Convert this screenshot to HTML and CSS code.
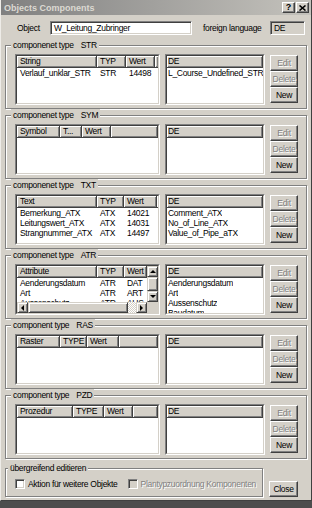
FILE: index.html
```html
<!DOCTYPE html>
<html lang="de">
<head>
    <meta charset="UTF-8">
    <title>Objects Components</title>
    <link rel="stylesheet" href="styles.css">
</head>
<body>
<div class="window">
    <div class="titlebar">
        <span class="title">Objects Components</span>
        <span class="tb-btns">
            <span class="tb-btn">?</span>
            <span class="tb-btn">
                <svg width="7" height="6" viewBox="0 0 7 6"><path d="M0.5 0.5 L6.5 5.5 M6.5 0.5 L0.5 5.5" stroke="#000" stroke-width="1.6"/></svg>
            </span>
        </span>
    </div>

    <div class="content">
        <div class="obj-row">
            <span class="obj-lbl">Object</span>
            <div class="edit obj-edit">W_Leitung_Zubringer</div>
            <span class="lang-lbl">foreign language</span>
            <div class="edit lang-edit">DE</div>
        </div>

        <!-- STR -->
        <fieldset class="group">
            <legend>componenet type<span class="type">STR</span></legend>
            <div class="group-body">
                <div class="list list-main">
                    <div class="list-in">
                        <div class="head">
                            <span class="hc c80">String</span>
                            <span class="hc c29">TYP</span>
                            <span class="hc c29">Wert</span>
                            <span class="hc fill"></span>
                        </div>
                        <div class="row">
                            <span class="cell c80">Verlauf_unklar_STR</span>
                            <span class="cell c29">STR</span>
                            <span class="cell c29">14498</span>
                        </div>
                    </div>
                </div>
                <div class="list list-lang">
                    <div class="list-in">
                        <div class="head"><span class="hc fill">DE</span></div>
                        <div class="row"><span class="cell">L_Course_Undefined_STR</span></div>
                    </div>
                </div>
                <div class="btns">
                    <span class="btn off">Edit</span>
                    <span class="btn off">Delete</span>
                    <span class="btn">New</span>
                </div>
            </div>
        </fieldset>

        <!-- SYM -->
        <fieldset class="group">
            <legend>componenet type<span class="type">SYM</span></legend>
            <div class="group-body">
                <div class="list list-main">
                    <div class="list-in">
                        <div class="head">
                            <span class="hc c43">Symbol</span>
                            <span class="hc c22">T...</span>
                            <span class="hc c29">Wert</span>
                            <span class="hc fill"></span>
                        </div>
                    </div>
                </div>
                <div class="list list-lang">
                    <div class="list-in">
                        <div class="head"><span class="hc fill">DE</span></div>
                    </div>
                </div>
                <div class="btns">
                    <span class="btn off">Edit</span>
                    <span class="btn off">Delete</span>
                    <span class="btn">New</span>
                </div>
            </div>
        </fieldset>

        <!-- TXT -->
        <fieldset class="group">
            <legend>componenet type<span class="type">TXT</span></legend>
            <div class="group-body">
                <div class="list list-main">
                    <div class="list-in">
                        <div class="head">
                            <span class="hc c80">Text</span>
                            <span class="hc c27">TYP</span>
                            <span class="hc c33">Wert</span>
                            <span class="hc fill"></span>
                        </div>
                        <div class="row">
                            <span class="cell c80">Bemerkung_ATX</span>
                            <span class="cell c27">ATX</span>
                            <span class="cell c33">14021</span>
                        </div>
                        <div class="row">
                            <span class="cell c80">Leitungswert_ATX</span>
                            <span class="cell c27">ATX</span>
                            <span class="cell c33">14031</span>
                        </div>
                        <div class="row">
                            <span class="cell c80">Strangnummer_ATX</span>
                            <span class="cell c27">ATX</span>
                            <span class="cell c33">14497</span>
                        </div>
                    </div>
                </div>
                <div class="list list-lang">
                    <div class="list-in">
                        <div class="head"><span class="hc fill">DE</span></div>
                        <div class="row"><span class="cell">Comment_ATX</span></div>
                        <div class="row"><span class="cell">No_of_Line_ATX</span></div>
                        <div class="row"><span class="cell">Value_of_Pipe_aTX</span></div>
                    </div>
                </div>
                <div class="btns">
                    <span class="btn off">Edit</span>
                    <span class="btn off">Delete</span>
                    <span class="btn">New</span>
                </div>
            </div>
        </fieldset>

        <!-- ATR -->
        <fieldset class="group">
            <legend>componenet type<span class="type">ATR</span></legend>
            <div class="group-body">
                <div class="list list-main">
                    <div class="list-in scrolled">
                        <div class="pane">
                            <div class="head">
                                <span class="hc c80">Attribute</span>
                                <span class="hc c27">TYP</span>
                                <span class="hc c23">Wert</span>
                            </div>
                            <div class="row">
                                <span class="cell c80">Aenderungsdatum</span>
                                <span class="cell c27">ATR</span>
                                <span class="cell c23">DAT</span>
                            </div>
                            <div class="row">
                                <span class="cell c80">Art</span>
                                <span class="cell c27">ATR</span>
                                <span class="cell c23">ART</span>
                            </div>
                            <div class="row">
                                <span class="cell c80">Aussenschutz</span>
                                <span class="cell c27">ATR</span>
                                <span class="cell c23">AUS</span>
                            </div>
                        </div>
                        <div class="vscroll">
                            <span class="sb-btn up"></span>
                            <span class="sb-thumb"></span>
                            <span class="sb-btn down"></span>
                        </div>
                        <div class="hscroll">
                            <span class="sb-btn left"></span>
                            <span class="sb-thumb wide"></span>
                            <span class="sb-track"></span>
                            <span class="sb-btn right"></span>
                        </div>
                        <div class="corner"></div>
                    </div>
                </div>
                <div class="list list-lang">
                    <div class="list-in">
                        <div class="head"><span class="hc fill">DE</span></div>
                        <div class="row"><span class="cell">Aenderungsdatum</span></div>
                        <div class="row"><span class="cell">Art</span></div>
                        <div class="row"><span class="cell">Aussenschutz</span></div>
                        <div class="row"><span class="cell">Baudatum</span></div>
                    </div>
                </div>
                <div class="btns">
                    <span class="btn off">Edit</span>
                    <span class="btn off">Delete</span>
                    <span class="btn">New</span>
                </div>
            </div>
        </fieldset>

        <!-- RAS -->
        <fieldset class="group">
            <legend>component type<span class="type">RAS</span></legend>
            <div class="group-body">
                <div class="list list-main">
                    <div class="list-in">
                        <div class="head">
                            <span class="hc c43">Raster</span>
                            <span class="hc c27">TYPE</span>
                            <span class="hc c32">Wert</span>
                            <span class="hc fill"></span>
                        </div>
                    </div>
                </div>
                <div class="list list-lang">
                    <div class="list-in">
                        <div class="head"><span class="hc fill">DE</span></div>
                    </div>
                </div>
                <div class="btns">
                    <span class="btn off">Edit</span>
                    <span class="btn off">Delete</span>
                    <span class="btn">New</span>
                </div>
            </div>
        </fieldset>

        <!-- PZD -->
        <fieldset class="group">
            <legend>component type<span class="type">PZD</span></legend>
            <div class="group-body">
                <div class="list list-main">
                    <div class="list-in">
                        <div class="head">
                            <span class="hc c56">Prozedur</span>
                            <span class="hc c31">TYPE</span>
                            <span class="hc c29">Wert</span>
                            <span class="hc fill"></span>
                        </div>
                    </div>
                </div>
                <div class="list list-lang">
                    <div class="list-in">
                        <div class="head"><span class="hc fill">DE</span></div>
                    </div>
                </div>
                <div class="btns">
                    <span class="btn off">Edit</span>
                    <span class="btn off">Delete</span>
                    <span class="btn">New</span>
                </div>
            </div>
        </fieldset>

        <div class="bottom-row">
            <fieldset class="group across">
                <legend>übergreifend editieren</legend>
                <div class="checks">
                    <span class="check first"><span class="box"></span>Aktion für weitere Objekte</span>
                    <span class="check disabled"><span class="box"></span>Plantypzuordnung Komponenten</span>
                </div>
            </fieldset>
            <span class="btn close">Close</span>
        </div>
    </div>
</div>
</body>
</html>
```

FILE: styles.css
```css
body {
    margin: 0;
    background: #4d4d4d;
    font-family: "Liberation Sans", Arial, sans-serif;
    font-size: 8.5px;
    letter-spacing: -0.3px;
    color: #000;
}
.window {
    width: 312px;
    height: 501px;
    box-sizing: border-box;
    background: #d4d0c8;
    border-left: 1px solid #eeece8;
    border-right: 1px solid #404040;
    border-bottom: 1px solid #404040;
    display: flex;
    flex-direction: column;
}
.titlebar {
    height: 15px;
    flex: none;
    display: flex;
    align-items: center;
    justify-content: space-between;
    padding: 0 2px 0 3px;
    background: linear-gradient(to right, #808080, #c4c2bc);
}
.title {
    color: #dcd9d2;
    font-weight: bold;
    font-size: 9px;
    letter-spacing: 0;
}
.tb-btns {
    display: flex;
    gap: 1px;
}
.tb-btn {
    width: 13px;
    height: 11px;
    box-sizing: border-box;
    display: flex;
    align-items: center;
    justify-content: center;
    background: #d4d0c8;
    border: 1px solid;
    border-color: #fff #404040 #404040 #fff;
    box-shadow: inset -1px -1px #808080;
    font-weight: bold;
    font-size: 9px;
    line-height: 9px;
    letter-spacing: 0;
}
.content {
    flex: 1;
    display: flex;
    flex-direction: column;
    padding: 6px 4px 0;
}

/* object row */
.obj-row {
    display: flex;
    align-items: center;
    height: 14px;
    margin-bottom: 4px;
    white-space: nowrap;
}
.obj-lbl {
    width: 33px;
    margin-left: 12px;
}
.edit {
    height: 14px;
    box-sizing: border-box;
    border: 1px solid;
    border-color: #808080 #fff #fff #808080;
    box-shadow: inset 1px 1px #404040, inset -1px -1px #d4d0c8;
    background: #fff;
    padding-left: 3px;
    line-height: 12px;
    white-space: nowrap;
}
.obj-edit {
    width: 142px;
}
.lang-lbl {
    width: 67px;
    margin-left: 11px;
}
.lang-edit {
    width: 35px;
    background: #d4d0c8;
}

/* group boxes */
.group {
    margin: 0;
    padding: 2px 8px 3px 9px;
    border: 1px solid #808080;
    box-shadow: inset 1px 1px #fff, 1px 1px #fff;
    min-width: 0;
}
.group legend {
    padding: 0 2px;
    margin-left: -4px;
    line-height: 13px;
    background: #d4d0c8;
    white-space: nowrap;
}
.type {
    margin-left: 7px;
}
.group-body {
    display: flex;
    gap: 5px;
}

/* list views */
.list {
    height: 51px;
    box-sizing: border-box;
    border: 1px solid;
    border-color: #808080 #fff #fff #808080;
}
.list-in {
    height: 100%;
    box-sizing: border-box;
    border: 1px solid;
    border-color: #404040 #d4d0c8 #d4d0c8 #404040;
    background: #fff;
    overflow: hidden;
}
.list-main {
    width: 145px;
}
.list-lang {
    width: 100px;
}
.head {
    display: flex;
    height: 12px;
}
.hc {
    flex: none;
    height: 12px;
    box-sizing: border-box;
    padding-left: 3px;
    line-height: 11px;
    background: #d4d0c8;
    border-right: 1px solid #404040;
    border-bottom: 1px solid #404040;
    box-shadow: inset 1px 1px #fff, inset -1px -1px #808080;
    white-space: nowrap;
    overflow: hidden;
}
.list-lang .hc {
    padding-left: 1px;
}
.hc.fill {
    flex: 1;
}
.row {
    display: flex;
    height: 10px;
    line-height: 10px;
}
.cell {
    flex: none;
    box-sizing: border-box;
    padding-left: 3px;
    white-space: nowrap;
    overflow: hidden;
}
.list-lang .cell {
    padding-left: 1px;
}
.c80 { width: 80px; }
.c56 { width: 56px; }
.c43 { width: 43px; }
.c33 { width: 33px; }
.c32 { width: 32px; }
.c31 { width: 31px; }
.c29 { width: 29px; }
.c27 { width: 27px; }
.c23 { width: 23px; }
.c22 { width: 22px; }

/* scrollbars */
.scrolled {
    display: grid;
    grid-template-columns: 1fr 11px;
    grid-template-rows: 1fr 11px;
}
.pane {
    overflow: hidden;
}
.vscroll {
    display: flex;
    flex-direction: column;
}
.hscroll {
    display: flex;
}
.corner {
    background: #d4d0c8;
}
.sb-btn,
.sb-thumb {
    flex: none;
    width: 11px;
    height: 11px;
    box-sizing: border-box;
    background: #d4d0c8;
    border: 1px solid;
    border-color: #d4d0c8 #404040 #404040 #d4d0c8;
    box-shadow: inset 1px 1px #fff, inset -1px -1px #808080;
    display: flex;
    align-items: center;
    justify-content: center;
}
.vscroll .sb-thumb {
    flex: 1;
    height: auto;
}
.sb-thumb.wide {
    width: 100px;
}
.sb-track {
    flex: 1;
    background: repeating-conic-gradient(#fff 0 25%, #d4d0c8 0 50%) 0 0 / 2px 2px;
}
.sb-btn::before {
    content: "";
    border: 3px solid transparent;
}
.sb-btn.up::before {
    border-top-width: 0;
    border-bottom-color: #000;
}
.sb-btn.down::before {
    border-bottom-width: 0;
    border-top-color: #000;
}
.sb-btn.left::before {
    border-left-width: 0;
    border-right-color: #000;
}
.sb-btn.right::before {
    border-right-width: 0;
    border-left-color: #000;
}

/* buttons */
.btns {
    display: flex;
    flex-direction: column;
    width: 28px;
    margin-top: 1px;
}
.btn {
    height: 16px;
    box-sizing: border-box;
    border: 1px solid;
    border-color: #fff #404040 #404040 #fff;
    box-shadow: inset -1px -1px #808080;
    background: #d4d0c8;
    text-align: center;
    line-height: 14px;
    white-space: nowrap;
}
.btn.off {
    color: #808080;
    text-shadow: 1px 1px #fff;
}

/* bottom row */
.bottom-row {
    display: flex;
    margin-top: 3px;
}
.group.across {
    width: 258px;
    box-sizing: border-box;
    padding: 3px 6px 5px 9px;
}
.group.across legend {
    margin-left: -7px;
}
.checks {
    display: flex;
    height: 11px;
    align-items: center;
}
.check {
    display: flex;
    align-items: center;
    white-space: nowrap;
}
.check.first {
    width: 117px;
}
.box {
    width: 10px;
    height: 10px;
    box-sizing: border-box;
    margin-right: 3px;
    border: 1px solid;
    border-color: #808080 #fff #fff #808080;
    box-shadow: inset 1px 1px #404040, inset -1px -1px #d4d0c8;
    background: #fff;
}
.check.disabled {
    color: #808080;
    text-shadow: 1px 1px #fff;
}
.check.disabled .box {
    background: #d4d0c8;
}
.btn.close {
    width: 29px;
    margin: 19px 0 0 6px;
}
```
